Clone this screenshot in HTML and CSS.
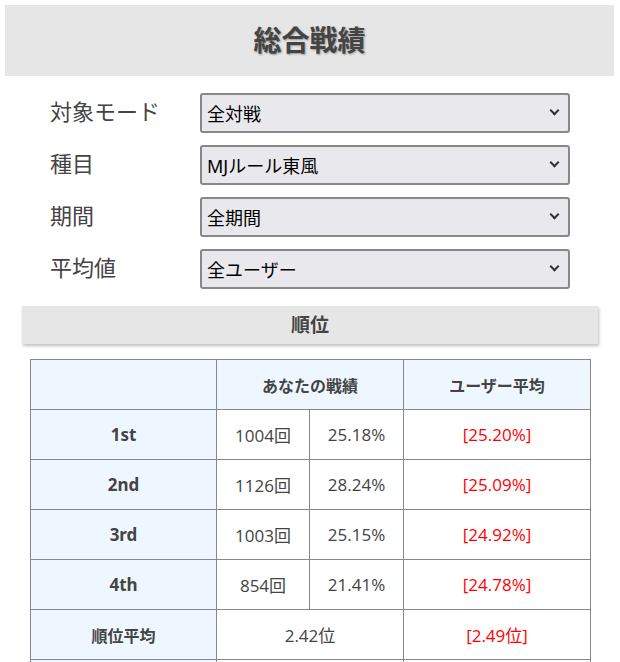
FILE: index.html
```html
<!DOCTYPE html>
<html lang="ja">
<head>
    <meta charset="UTF-8">
    <meta name="viewport" content="width=device-width, initial-scale=1.0">
    <title>総合戦績</title>
    <link rel="stylesheet" href="styles.css">
</head>
<body>
    <div class="panel">
        <h1 class="panel-title">総合戦績</h1>
        <form class="filters">
            <div class="form-row">
                <label for="mode">対象モード</label>
                <div class="select-wrap"><select id="mode"><option>全対戦</option></select></div>
            </div>
            <div class="form-row">
                <label for="rule">種目</label>
                <div class="select-wrap"><select id="rule"><option>MJルール東風</option></select></div>
            </div>
            <div class="form-row">
                <label for="term">期間</label>
                <div class="select-wrap"><select id="term"><option>全期間</option></select></div>
            </div>
            <div class="form-row">
                <label for="avg">平均値</label>
                <div class="select-wrap"><select id="avg"><option>全ユーザー</option></select></div>
            </div>
        </form>

        <h2 class="section-title">順位</h2>
        <table class="stats">
            <colgroup>
                <col class="c-label">
                <col class="c-count">
                <col class="c-rate">
                <col>
            </colgroup>
            <tr class="head">
                <th></th>
                <th colspan="2">あなたの戦績</th>
                <th>ユーザー平均</th>
            </tr>
            <tr>
                <th>1st</th>
                <td>1004回</td>
                <td>25.18%</td>
                <td class="avg">[25.20%]</td>
            </tr>
            <tr>
                <th>2nd</th>
                <td>1126回</td>
                <td>28.24%</td>
                <td class="avg">[25.09%]</td>
            </tr>
            <tr>
                <th>3rd</th>
                <td>1003回</td>
                <td>25.15%</td>
                <td class="avg">[24.92%]</td>
            </tr>
            <tr>
                <th>4th</th>
                <td>854回</td>
                <td>21.41%</td>
                <td class="avg">[24.78%]</td>
            </tr>
            <tr>
                <th class="small">順位平均</th>
                <td colspan="2">2.42位</td>
                <td class="avg">[2.49位]</td>
            </tr>
            <tr>
                <th></th>
                <td colspan="2"></td>
                <td></td>
            </tr>
        </table>
    </div>
</body>
</html>
```

FILE: styles.css
```css
html {
    overflow: hidden;
}

body {
    margin: 5px 6px 0 5px;
    background: #ffffff;
    font-family: "Noto Sans", "Noto Sans CJK JP", sans-serif;
    color: #444;
}

.panel {
    background: #ffffff;
    box-shadow: 0 0 5px rgba(110, 130, 150, 0.45);
    height: 657px;
    overflow: hidden;
}

.panel-title {
    margin: 0;
    height: 71px;
    line-height: 71px;
    background: #e6e6e6;
    text-align: center;
    font-size: 28px;
    font-weight: bold;
    color: #444;
    text-shadow: 1px 1px 2px rgba(0, 0, 0, 0.35);
}

.filters {
    padding: 17px 0 0 45px;
    display: flex;
    flex-direction: column;
    gap: 12px;
}

.form-row {
    display: flex;
    align-items: center;
    height: 40px;
}

.form-row label {
    width: 150px;
    font-size: 22px;
    color: #444;
    margin-top: -6px;
}

.select-wrap {
    position: relative;
}

.select-wrap::after {
    content: "";
    position: absolute;
    right: 12px;
    top: 14px;
    width: 5px;
    height: 5px;
    border-right: 2px solid #333;
    border-bottom: 2px solid #333;
    transform: rotate(45deg);
    pointer-events: none;
}

.form-row select {
    appearance: none;
    width: 370px;
    height: 40px;
    border: 2px solid #888;
    border-radius: 3px;
    background: #e9e9ed;
    font-family: "Noto Sans", "Noto Sans CJK JP", sans-serif;
    font-size: 18px;
    color: #000;
    padding: 2px 0 0 5px;
}

.section-title {
    margin: 17px 16px 0 17px;
    height: 38px;
    line-height: 38px;
    background: #e6e6e6;
    text-align: center;
    font-size: 19px;
    font-weight: bold;
    color: #444;
    box-shadow: 1px 2px 3px rgba(0, 0, 0, 0.25);
}

.stats {
    margin: 15px 0 0 25px;
    width: 561px;
    border-collapse: collapse;
    table-layout: fixed;
    font-size: 17px;
}

.stats .c-label {
    width: 186px;
}

.stats .c-count {
    width: 93px;
}

.stats .c-rate {
    width: 94px;
}

.stats th,
.stats td {
    border: 1px solid #888;
    height: 49px;
    padding: 0;
    text-align: center;
}

.stats th {
    background: #eef7ff;
    font-weight: bold;
    font-size: 17px;
    color: #444;
}

.stats .head th,
.stats .small {
    font-size: 16px;
}

.stats td {
    color: #444;
    font-family: "Open Sans", "Noto Sans CJK JP", sans-serif;
}

.stats .avg {
    color: #ff0000;
}
```
